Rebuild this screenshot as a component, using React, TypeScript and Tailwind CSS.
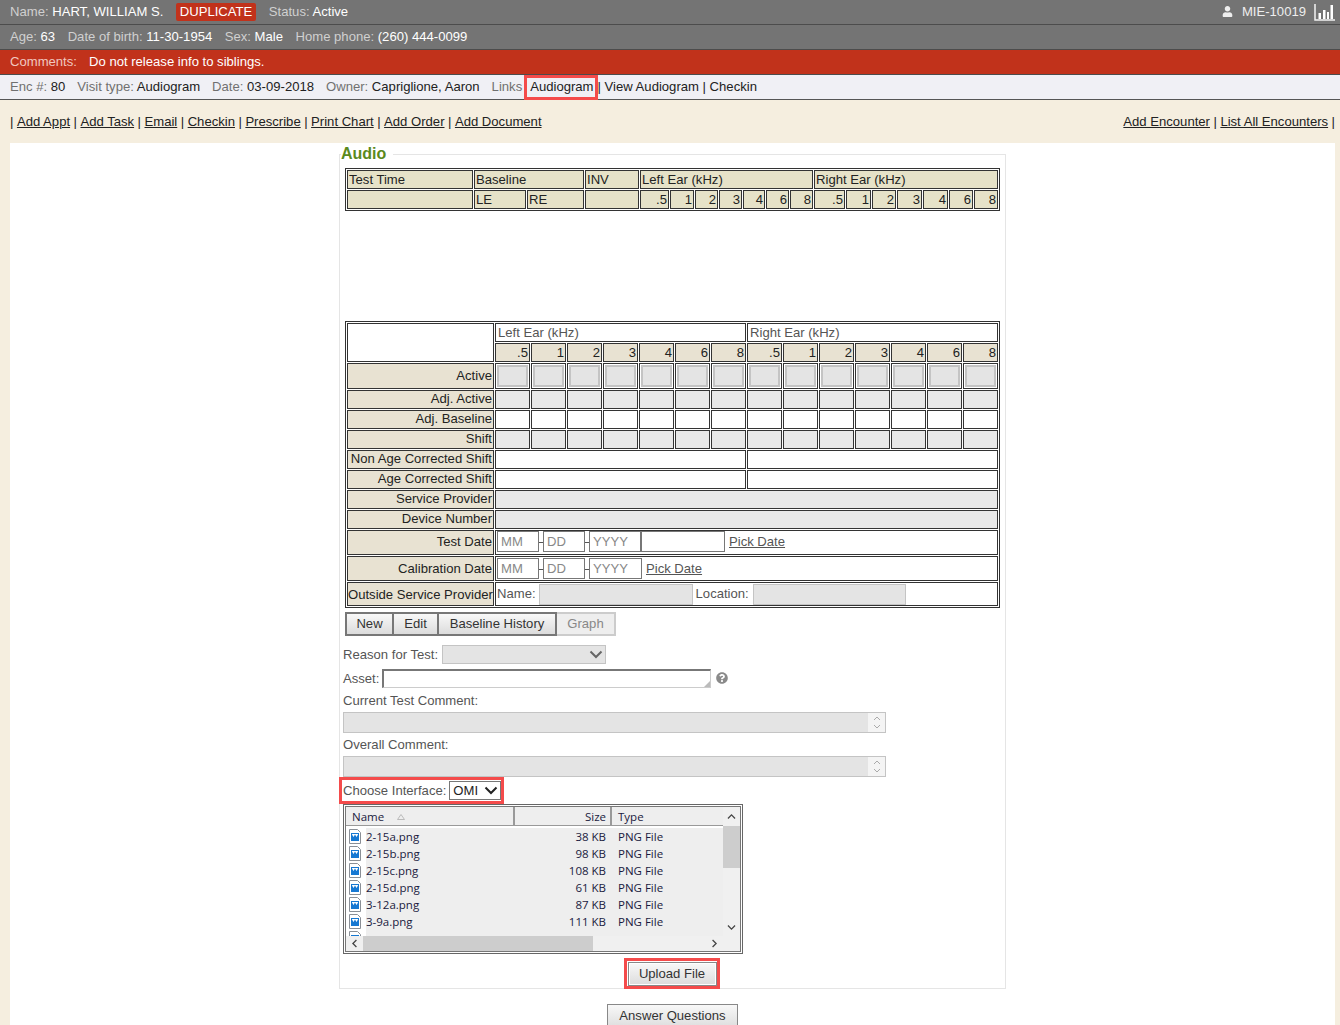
import React from "react";
import { FaUser, FaQuestionCircle } from "react-icons/fa";

const L = ({ children }: { children: React.ReactNode }) => <span className="text-[#d0d0d0]">{children}</span>;
const LD = ({ children }: { children: React.ReactNode }) => <span className="text-[#707070]">{children}</span>;
const A = ({ children }: { children: React.ReactNode }) => <a className="underline">{children}</a>;

const cellA = "border border-[#333] bg-[#e6e2c8] p-0 px-px font-normal text-left text-[#222] leading-none";
const cellAR = "border border-[#333] bg-[#e6e2c8] p-0 pr-px font-normal text-right text-[#222] leading-none";
const lab = "border border-[#333] bg-[#e8e2d2] p-0 pr-px text-right text-[#222] leading-none whitespace-nowrap";
const labUp = "border border-[#333] bg-[#e8e2d2] p-0 pr-px pb-[2px] text-right text-[#222] leading-none whitespace-nowrap";
const cellW = "border border-[#333] bg-white p-0 text-left text-[#555] leading-none";
const cellG = "border border-[#333] bg-[#e8e8e8] p-0";
const freqs = [".5", "1", "2", "3", "4", "6", "8"];
const all = [...freqs, ...freqs];
const btn = "border-2 border-[#777] bg-gradient-to-b from-[#f8f8f8] to-[#dcdcdc] flex items-center justify-center";

function SmallInput({ w, ph, cls = "" }: { w: string; ph: string; cls?: string }) {
  return (
    <div className={`${w} ${cls} h-[21px] border border-[#777] bg-white text-[#888] flex items-center px-[3px]`}>{ph}</div>
  );
}

function Chevron({ cls = "" }: { cls?: string }) {
  return (
    <svg width="14" height="9" viewBox="0 0 14 9" className={cls}>
      <path d="M1.5 1.5 L7 7 L12.5 1.5" fill="none" stroke="currentColor" strokeWidth="2" />
    </svg>
  );
}

function Stepper() {
  return (
    <div className="w-[17px] h-full bg-[#f4f4f4] flex flex-col items-center justify-center gap-[3px] text-[#aaa]">
      <svg width="8" height="5" viewBox="0 0 8 5"><path d="M1 4 L4 1 L7 4" fill="none" stroke="currentColor" /></svg>
      <svg width="8" height="5" viewBox="0 0 8 5"><path d="M1 1 L4 4 L7 1" fill="none" stroke="currentColor" /></svg>
    </div>
  );
}

function FileIcon() {
  return (
    <svg width="12" height="15" viewBox="0 0 12 15">
      <path d="M.5.5H8.5L11.5 3.5V14.5H.5Z" fill="#fff" stroke="#8a8f96" />
      <rect x="2" y="4" width="8" height="8" fill="#1678d2" />
      <path d="M3 5.5L4.5 8L6 5.5L7.5 8L9 5.5V5H3Z" fill="#fff" />
    </svg>
  );
}

const files = [
  ["2-15a.png", "38 KB"],
  ["2-15b.png", "98 KB"],
  ["2-15c.png", "108 KB"],
  ["2-15d.png", "61 KB"],
  ["3-12a.png", "87 KB"],
  ["3-9a.png", "111 KB"],
];

function Explorer() {
  const font = { fontFamily: '"Open Sans","Noto Sans",sans-serif' };
  return (
    <div className="w-[400px] h-[150px] border border-[#666] p-[1px] bg-white">
      <div className="w-full h-full border border-[#777] bg-[#f0f0f0] flex flex-col text-[11.5px] text-[#1a1a40]" style={font}>
        <div className="flex h-[129px]">
          <div className="w-[377px] flex flex-col">
            <div className="flex h-[19px] bg-[#eeeeee] border-b border-[#999] items-center">
              <div className="w-[169px] h-full border-r-2 border-[#999] pl-[6px] pt-[2px] flex items-center gap-[12px]">
                Name
                <svg width="8" height="6" viewBox="0 0 8 6" className="ml-[1px]"><path d="M4 .5L7.5 5.5H.5Z" fill="#eee" stroke="#bbb" /></svg>
              </div>
              <div className="w-[97px] h-full border-r-2 border-[#999] pr-[4px] pt-[2px] flex items-center justify-end">Size</div>
              <div className="flex-1 pl-[6px] pt-[2px]">Type</div>
            </div>
            <div className="flex-1 bg-white pt-[2px] overflow-hidden">
              {[...files, ["", ""]].map(([n, s], i) => (
                <div key={i} className="flex h-[17px] items-center">
                  <div className="w-[20px] pl-[3px] shrink-0 flex items-center"><FileIcon /></div>
                  <div className="flex items-center h-full flex-1 bg-[#eeeeee]">
                    <div className="w-[151px]">{n}</div>
                    <div className="w-[92px] text-right pr-[3px]">{s}</div>
                    <div className="pl-[9px]">{n ? "PNG File" : ""}</div>
                  </div>
                </div>
              ))}
            </div>
          </div>
          <div className="w-[17px] flex flex-col items-center bg-[#f0f0f0] text-[#444]">
            <div className="h-[19px] flex items-center justify-center rotate-180"><Chevron cls="w-[9px]" /></div>
            <div className="w-full h-[42px] bg-[#cdcdcd]" />
            <div className="flex-1" />
            <div className="h-[17px] flex items-center justify-center"><Chevron cls="w-[9px]" /></div>
          </div>
        </div>
        <div className="flex-1 flex items-center text-[#444]">
          <div className="w-[17px] flex justify-center rotate-90"><Chevron cls="w-[9px]" /></div>
          <div className="w-[230px] h-full bg-[#cdcdcd]" />
          <div className="flex-1" />
          <div className="w-[17px] mr-[17px] flex justify-center -rotate-90"><Chevron cls="w-[9px]" /></div>
        </div>
      </div>
    </div>
  );
}

export default function App() {
  return (
    <div className="w-[1340px] h-[1025px] overflow-hidden bg-[#f5eedf] text-[13.1px] text-[#222]" style={{ fontFamily: '"Liberation Sans",Arial,sans-serif' }}>
      <div className="h-[25px] bg-[#747474] border-b border-[#4c4c4c] flex items-center justify-between px-[10px] text-white">
        <div className="flex items-center">
          <span><L>Name:</L> HART, WILLIAM S.</span>
          <span className="ml-[13px] h-[18px] px-[3.5px] bg-[#c1321b] rounded-[2px] flex items-center">DUPLICATE</span>
          <span className="ml-[13px]"><L>Status:</L> Active</span>
        </div>
        <div className="flex items-center">
          <FaUser className="w-[11px] h-[11px] text-[#eee]" />
          <span className="ml-[9px] text-[#eee]">MIE-10019</span>
          <svg width="21" height="18" viewBox="0 0 21 18" className="ml-[8px] mr-[-5px]">
            <path d="M1 1V17H21" fill="none" stroke="#f2f2f2" strokeWidth="1.5" />
            <path d="M4.5 10h2.5v6H4.5zM9 7h2.5v9H9zM13 9h2v7h-2zM16.5 2h2.5v14h-2.5z" fill="#fff" />
          </svg>
        </div>
      </div>
      <div className="h-[25px] bg-[#747474] border-b border-[#4c4c4c] flex items-center gap-[12.5px] px-[10px] text-white">
        <span><L>Age:</L> 63</span>
        <span><L>Date of birth:</L> 11-30-1954</span>
        <span><L>Sex:</L> Male</span>
        <span><L>Home phone:</L> (260) 444-0099</span>
      </div>
      <div className="h-[25px] bg-[#c1321b] border-b border-[#4c4c4c] flex items-center px-[10px] text-white">
        <span className="text-[#f0c8c0] w-[79px]">Comments:</span>
        <span>Do not release info to siblings.</span>
      </div>
      <div className="h-[25px] bg-[#f0f0f5] border-b border-[#555] flex items-center px-[10px] text-[#222]">
        <span><LD>Enc #:</LD> 80</span>
        <span className="ml-[12px]"><LD>Visit type:</LD> Audiogram</span>
        <span className="ml-[12px]"><LD>Date:</LD> 03-09-2018</span>
        <span className="ml-[12px]"><LD>Owner:</LD> Capriglione, Aaron</span>
        <span className="ml-[12px]"><LD>Links</LD></span>
        <span className="ml-[2px] h-[25px] border-[3px] border-[#f44b4b] flex items-center pl-[3px] pr-[1px]">Audiogram</span>
        <span>| View Audiogram | Checkin</span>
      </div>
      <div className="h-[43px] flex items-center justify-between pl-[10px] pr-[5px]">
        <div className="flex gap-[3.5px]">
          | <A>Add Appt</A> | <A>Add Task</A> | <A>Email</A> | <A>Checkin</A> | <A>Prescribe</A> | <A>Print Chart</A> | <A>Add Order</A> | <A>Add Document</A>
        </div>
        <div className="flex gap-[3.5px]">
          <A>Add Encounter</A> | <A>List All Encounters</A> |
        </div>
      </div>
      <div className="ml-[10px] mr-[5px] h-[882px] bg-white pt-[2px] flex flex-col items-center">
        <fieldset className="w-[667px] h-[844px] border border-[#e5e5e5] p-0 m-0">
          <legend className="ml-px pr-[7px] text-[16px] leading-[18px] font-bold text-[#5b8a1c]">Audio</legend>
          <div className="pl-[3px] pt-[5px]">
            <table className="ml-[2px] w-[655px] table-fixed border-separate border-spacing-[1px] border border-[#333]">
              <colgroup>
                {[126, 52, 57, 54, 29, 24, 23, 23, 22, 23, 23, 31, 25, 24, 25, 25, 24, 24].map((w, i) => (
                  <col key={i} style={{ width: w }} />
                ))}
              </colgroup>
              <tbody>
                <tr className="h-[19px]">
                  <td className={cellA}>Test Time</td>
                  <td colSpan={2} className={cellA}>Baseline</td>
                  <td className={cellA}>INV</td>
                  <td colSpan={7} className={cellA}>Left Ear (kHz)</td>
                  <td colSpan={7} className={cellA}>Right Ear (kHz)</td>
                </tr>
                <tr className="h-[19px]">
                  <td className={cellA}></td>
                  <td className={cellA}>LE</td>
                  <td className={cellA}>RE</td>
                  <td className={cellA}></td>
                  {all.map((f, i) => <td key={i} className={cellAR}>{f}</td>)}
                </tr>
              </tbody>
            </table>
            <div className="h-[110px]" />
            <table className="ml-[2px] w-[655px] table-fixed border-separate border-spacing-[1px] border border-[#333]">
              <colgroup>
                <col className="w-[147px]" />
                {all.map((_, i) => <col key={i} className="w-[35px]" />)}
              </colgroup>
              <tbody>
                <tr className="h-[19px]">
                  <td rowSpan={2} className="border border-[#333] bg-white p-0"></td>
                  <td colSpan={7} className={cellW}><span className="pl-[2px]">Left Ear (kHz)</span></td>
                  <td colSpan={7} className={cellW}><span className="pl-[2px]">Right Ear (kHz)</span></td>
                </tr>
                <tr className="h-[19px]">
                  {all.map((f, i) => <td key={i} className={lab}>{f}</td>)}
                </tr>
                <tr className="h-[26px]">
                  <td className={lab}>Active</td>
                  {all.map((_, i) => (
                    <td key={i} className="border border-[#333] p-0 bg-white">
                      <div className="m-px h-[22px] border-2 border-[#c4c4c4] bg-[#e4e4e4]" />
                    </td>
                  ))}
                </tr>
                <tr className="h-[19px]">
                  <td className={labUp}>Adj. Active</td>
                  {all.map((_, i) => <td key={i} className={cellG}></td>)}
                </tr>
                <tr className="h-[19px]">
                  <td className={labUp}>Adj. Baseline</td>
                  {all.map((_, i) => <td key={i} className="border border-[#333] bg-white p-0"></td>)}
                </tr>
                <tr className="h-[19px]">
                  <td className={labUp}>Shift</td>
                  {all.map((_, i) => <td key={i} className={cellG}></td>)}
                </tr>
                <tr className="h-[19px]">
                  <td className={labUp}>Non Age Corrected Shift</td>
                  <td colSpan={7} className={cellW}></td>
                  <td colSpan={7} className={cellW}></td>
                </tr>
                <tr className="h-[19px]">
                  <td className={labUp}>Age Corrected Shift</td>
                  <td colSpan={7} className={cellW}></td>
                  <td colSpan={7} className={cellW}></td>
                </tr>
                <tr className="h-[19px]">
                  <td className={labUp}>Service Provider</td>
                  <td colSpan={14} className={cellG}></td>
                </tr>
                <tr className="h-[19px]">
                  <td className={labUp}>Device Number</td>
                  <td colSpan={14} className={cellG}></td>
                </tr>
                <tr className="h-[25px]">
                  <td className={labUp}>Test Date</td>
                  <td colSpan={14} className={`${cellW} pb-[2px]`}>
                    <div className="flex items-center pl-px">
                      <SmallInput w="w-[42px]" ph="MM" />
                      <span className="w-[4px] h-px bg-[#555] mt-px" />
                      <SmallInput w="w-[42px]" ph="DD" />
                      <span className="w-[4px] h-px bg-[#555] mt-px" />
                      <SmallInput w="w-[53px]" ph="YYYY" cls="border-r-[2px]" />
                      <div className="w-[83px] h-[21px] border border-[#777] border-l-0 bg-white" />
                      <span className="ml-[4px]"><A>Pick Date</A></span>
                    </div>
                  </td>
                </tr>
                <tr className="h-[25px]">
                  <td className={lab}>Calibration Date</td>
                  <td colSpan={14} className={cellW}>
                    <div className="flex items-center pl-px">
                      <SmallInput w="w-[42px]" ph="MM" />
                      <span className="w-[4px] h-px bg-[#555] mt-px" />
                      <SmallInput w="w-[42px]" ph="DD" />
                      <span className="w-[4px] h-px bg-[#555] mt-px" />
                      <SmallInput w="w-[53px]" ph="YYYY" />
                      <span className="ml-[4px]"><A>Pick Date</A></span>
                    </div>
                  </td>
                </tr>
                <tr className="h-[24px]">
                  <td className={`${lab} pt-[2px]`}>Outside Service Provider</td>
                  <td colSpan={14} className={cellW}>
                    <div className="flex items-center pl-px">
                      Name:
                      <div className="ml-[3px] w-[154px] h-[21px] border border-[#c4c4c4] bg-[#e4e4e4]" />
                      <span className="ml-[3px]">Location:</span>
                      <div className="ml-[4px] w-[153px] h-[21px] border border-[#c4c4c4] bg-[#e4e4e4]" />
                    </div>
                  </td>
                </tr>
              </tbody>
            </table>
            <div className="ml-[2px] mt-[4px] flex h-[24px] text-[#333]">
              <div className={`w-[49px] ${btn}`}>New</div>
              <div className={`w-[45px] border-l-0 ${btn}`}>Edit</div>
              <div className={`w-[118px] border-l-0 ${btn}`}>Baseline History</div>
              <div className="w-[59px] border-2 border-l-0 border-[#ccc] bg-[#eeeeee] text-[#888] flex items-center justify-center">Graph</div>
            </div>
            <div className="mt-[9px] flex items-center h-[19px] text-[#555]">
              Reason for Test:
              <div className="ml-[4px] w-[164px] h-[19px] bg-[#e4e4e4] border border-[#c4c4c4] flex items-center justify-end pr-[2px] text-[#666]">
                <Chevron />
              </div>
            </div>
            <div className="mt-[5px] flex items-center h-[19px] text-[#555]">
              Asset:
              <div className="relative ml-[3px] w-[329px] h-[19px] bg-white border border-[#ccc] border-t-[#777] border-l-[#777] border-t-2 border-l-2">
                <svg width="6" height="6" viewBox="0 0 6 6" className="absolute right-0 bottom-0"><path d="M6 0V6H0Z" fill="#bbb" /></svg>
              </div>
              <FaQuestionCircle className="ml-[5px] -mt-[1px] w-[12px] h-[12px] text-[#8a8a8a]" />
            </div>
            <div className="mt-[5px] h-[15px] leading-[15px] text-[#555]">Current Test Comment:</div>
            <div className="mt-[4px] w-[543px] h-[21px] bg-[#e4e4e4] border border-[#c4c4c4] flex justify-end"><Stepper /></div>
            <div className="mt-[4px] h-[15px] leading-[15px] text-[#555]">Overall Comment:</div>
            <div className="mt-[4px] w-[543px] h-[21px] bg-[#e4e4e4] border border-[#c4c4c4] flex justify-end"><Stepper /></div>
            <div className="-ml-[4px] w-[165px] h-[27px] border-[3px] border-[#f44b4b] flex items-center pl-[1px] text-[#555] whitespace-nowrap">
              Choose Interface:
              <div className="ml-[3px] w-[52px] h-[19px] border border-[#777] bg-white text-[#222] flex items-center justify-between pl-[3px] pr-[2px]">
                OMI
                <Chevron cls="text-[#222]" />
              </div>
            </div>
            <Explorer />
            <div className="mt-[4px] ml-[281px] w-[96px] h-[31px] border-[3px] border-[#f44b4b] flex items-center justify-center bg-white">
              <div className="w-[89px] h-[24px] border border-[#888] bg-gradient-to-b from-[#f8f8f8] to-[#dcdcdc] text-[#333] flex items-center justify-center shadow-[inset_0_0_0_1px_#fff]">Upload File</div>
            </div>
          </div>
        </fieldset>
        <div className="mt-[15px] w-[131px] h-[26px] pb-[2px] shrink-0 border border-[#888] bg-gradient-to-b from-[#f8f8f8] to-[#dcdcdc] text-[#333] flex items-center justify-center">Answer Questions</div>
      </div>
    </div>
  );
}
